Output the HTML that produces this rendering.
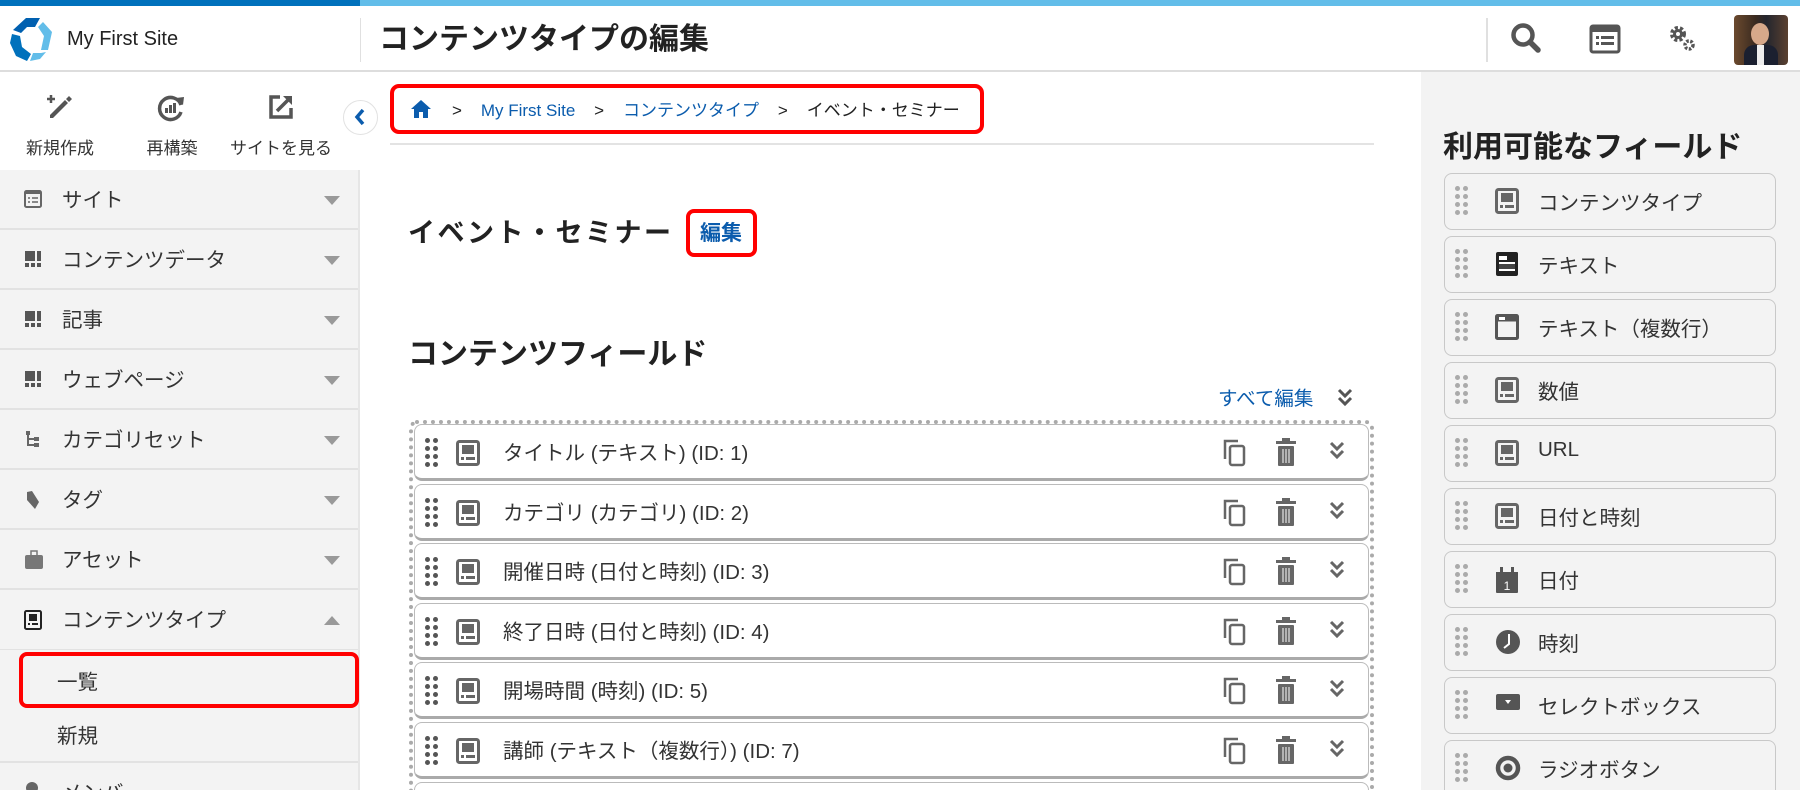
<!DOCTYPE html>
<html><head><meta charset="utf-8"><style>
*{box-sizing:border-box;margin:0;padding:0}
html{width:1800px;height:790px;overflow:hidden}
body{width:1800px;height:790px;overflow:hidden;background:#fff;font-family:"Liberation Sans","Noto Sans CJK JP",sans-serif;color:#222;position:relative}
.a{position:absolute}
.stripe1{left:0;top:0;width:360px;height:6px;background:#0071bc}
.stripe2{left:360px;top:0;width:1440px;height:6px;background:#62bde9}
.hdr{left:0;top:6px;width:1800px;height:66px;border-bottom:2px solid #ddd}
.side{left:0;top:72px;width:360px;height:718px;background:#f3f3f3;border-right:2px solid #e6e6e6}
.tool{left:0;top:72px;width:360px;height:98px;background:#fff}
.tl{font-size:17px;color:#333;width:110px;text-align:center}
.item{left:0;width:358px;height:60px;border-bottom:2px solid #e2e2e2;font-size:20.5px;color:#333}
.item span{position:absolute;left:62px;top:13px}
.item svg.ic{position:absolute;left:24px;top:20px}
.caret{position:absolute;left:324px;top:26px;width:0;height:0;border-left:8px solid transparent;border-right:8px solid transparent;border-top:9px solid #999}
.caret.up{border-top:none;border-bottom:9px solid #999}
.right{left:1421px;top:72px;width:379px;height:718px;background:#f3f3f3}
.fi{left:1444px;width:332px;height:57px;border:1.5px solid #c8c8c8;border-radius:8px;background:#f3f3f3;font-size:20.5px;color:#333}
.fi span{position:absolute;left:93px;top:12px}
.row{left:414px;width:955px;height:57px;border:1.5px solid #bbb;border-bottom:3px solid #aaa;border-radius:8px;background:#fff;font-size:20.5px;color:#333}
.row span{position:absolute;left:88px;top:11px}
.grip{position:absolute;display:grid;grid-template-columns:5px 5px;gap:3px 3px}
.grip i{width:5px;height:5px;border-radius:50%;background:#555;display:block}
.grip.l i{background:#aaa}
</style></head><body>
<div class="a stripe1"></div><div class="a stripe2"></div>
<div class="a hdr"></div>
<svg class="a" style="left:10px;top:16px" width="44" height="46" viewBox="0 0 44 46">
<path d="M16 2 L30 2 L25 11 L17 11 L11 17 L3 14 Z" fill="#0060b0"/>
<path d="M33 6 L42 16 L38 34 L31 34 L34 20 L28 11 Z" fill="#62bde9"/>
<path d="M2 18 L10 20 L12 31 L21 38 L17 45 L6 40 L0 27 Z" fill="#0071bc"/>
<path d="M23 37 L31 37 L36 36 L30 43 L20 45 Z" fill="#62bde9"/>
</svg>
<div class="a" style="left:67px;top:28px;font-size:20px;color:#222">My First Site</div>
<div class="a" style="left:360px;top:18px;width:1px;height:44px;background:#e0e0e0"></div>
<div class="a" style="left:379px;top:14px;font-size:30px;font-weight:bold;color:#222">コンテンツタイプの編集</div>
<div class="a" style="left:1486px;top:18px;width:2px;height:44px;background:#e0e0e0"></div>
<svg class="a" style="left:1510px;top:22px" width="32" height="32" viewBox="0 0 32 32"><circle cx="13" cy="13" r="9.5" fill="none" stroke="#555" stroke-width="4.5"/><path d="M20 20 L28 28" stroke="#555" stroke-width="5.5" stroke-linecap="round"/></svg>
<svg class="a" style="left:1589px;top:24px" width="32" height="30" viewBox="0 0 32 30"><rect x="2" y="2" width="28" height="26" rx="2" fill="none" stroke="#555" stroke-width="3"/><rect x="2" y="2" width="28" height="6" fill="#555"/><rect x="7" y="12" width="3" height="3" fill="#555"/><rect x="12" y="12" width="13" height="3" fill="#555"/><rect x="7" y="18" width="3" height="3" fill="#555"/><rect x="12" y="18" width="13" height="3" fill="#555"/></svg>
<svg class="a" style="left:1668px;top:22px" width="30" height="32" viewBox="0 0 30 32"><circle cx="10" cy="12" r="6" fill="none" stroke="#555" stroke-width="4" stroke-dasharray="3 2"/><circle cx="10" cy="12" r="3.5" fill="none" stroke="#555" stroke-width="3"/><circle cx="21" cy="23" r="4" fill="none" stroke="#555" stroke-width="3.5" stroke-dasharray="2.5 1.5"/></svg>
<div class="a" style="left:1734px;top:15px;width:54px;height:50px;border-radius:4px;background:linear-gradient(90deg,#6b4a2e,#3a2a20 40%,#24262e 60%,#5a4030);overflow:hidden"><div style="position:absolute;left:17px;top:8px;width:18px;height:22px;border-radius:50%;background:#d6a88a"></div><div style="position:absolute;left:10px;top:30px;width:34px;height:22px;background:#1b2030;border-radius:10px 10px 0 0"></div><div style="position:absolute;left:23px;top:30px;width:7px;height:20px;background:#eee"></div></div>

<div class="a side"></div>
<div class="a tool"></div>
<svg class="a" style="left:46px;top:93px" width="28" height="28" viewBox="0 0 28 28"><path d="M7 25 L4 25 L4 22 L19 7 L22 10 Z M20 6 L23 3 L26 6 L23 9 Z" fill="#555"/><path d="M5 2 V10 M1 6 H9" stroke="#555" stroke-width="2.5"/></svg>
<svg class="a" style="left:156px;top:93px" width="30" height="30" viewBox="0 0 30 30"><path d="M25 12 A11 11 0 1 0 25 19" fill="none" stroke="#555" stroke-width="3.5"/><path d="M20 5 L28 4 L27 12 Z" fill="#555"/><rect x="9" y="15" width="3" height="5" fill="#555"/><rect x="13" y="12" width="3" height="8" fill="#555"/><rect x="17" y="10" width="3" height="10" fill="#555"/></svg>
<svg class="a" style="left:268px;top:94px" width="26" height="26" viewBox="0 0 26 26"><path d="M12 3 H3 V23 H23 V14" fill="none" stroke="#555" stroke-width="3.5"/><path d="M9 17 L22 4" stroke="#555" stroke-width="3.5"/><path d="M15 2 H24 V11 Z" fill="#555"/></svg>
<div class="a tl" style="left:5px;top:134px">新規作成</div>
<div class="a tl" style="left:117px;top:134px">再構築</div>
<div class="a tl" style="left:226px;top:134px">サイトを見る</div>
<div class="a" style="left:343px;top:100px;width:35px;height:35px;border-radius:50%;background:#fff;border:1px solid #e2e2e2"></div>
<svg class="a" style="left:353px;top:108px" width="14" height="18" viewBox="0 0 14 18"><path d="M10 2 L4 9 L10 16" fill="none" stroke="#0b5cad" stroke-width="3.5"/></svg>

<div class="a item" style="top:170px"><svg class="ic" width="18" height="18" viewBox="0 0 18 18"><rect x="1" y="1" width="16" height="16" rx="1.5" fill="none" stroke="#666" stroke-width="2"/><rect x="1" y="1" width="16" height="3" fill="#666"/><path d="M4 8H6M8 8H14M4 12H6M8 12H14" stroke="#666" stroke-width="1.6"/></svg><span>サイト</span><div class="caret"></div></div>
<div class="a item" style="top:230px"><svg class="ic" width="18" height="18" viewBox="0 0 18 18"><rect x="1" y="1" width="10" height="10" fill="#555"/><rect x="13" y="1" width="4" height="10" fill="#555"/><rect x="1" y="13" width="4" height="4" fill="#555"/><rect x="7" y="13" width="4" height="4" fill="#555"/><rect x="13" y="13" width="4" height="4" fill="#555"/></svg><span>コンテンツデータ</span><div class="caret"></div></div>
<div class="a item" style="top:290px"><svg class="ic" width="18" height="18" viewBox="0 0 18 18"><rect x="1" y="1" width="10" height="10" fill="#555"/><rect x="13" y="1" width="4" height="10" fill="#555"/><rect x="1" y="13" width="4" height="4" fill="#555"/><rect x="7" y="13" width="4" height="4" fill="#555"/><rect x="13" y="13" width="4" height="4" fill="#555"/></svg><span>記事</span><div class="caret"></div></div>
<div class="a item" style="top:350px"><svg class="ic" width="18" height="18" viewBox="0 0 18 18"><rect x="1" y="1" width="10" height="10" fill="#555"/><rect x="13" y="1" width="4" height="10" fill="#555"/><rect x="1" y="13" width="4" height="4" fill="#555"/><rect x="7" y="13" width="4" height="4" fill="#555"/><rect x="13" y="13" width="4" height="4" fill="#555"/></svg><span>ウェブページ</span><div class="caret"></div></div>
<div class="a item" style="top:410px"><svg class="ic" width="18" height="18" viewBox="0 0 18 18"><rect x="2" y="1" width="4" height="4" fill="#666"/><path d="M4 5V15H10M4 9H10" stroke="#666" stroke-width="2" fill="none"/><rect x="10" y="7" width="5" height="4" fill="#666"/><rect x="10" y="13" width="5" height="4" fill="#666"/></svg><span>カテゴリセット</span><div class="caret"></div></div>
<div class="a item" style="top:470px"><svg class="ic" width="18" height="20" viewBox="0 0 18 20"><path d="M3 2 L8 1 L15 12 L11 19 L3 10 Z" fill="#666"/></svg><span>タグ</span><div class="caret"></div></div>
<div class="a item" style="top:530px"><svg class="ic" width="20" height="20" viewBox="0 0 20 20"><rect x="1" y="5" width="18" height="14" rx="2" fill="#777"/><rect x="7" y="1" width="6" height="5" fill="none" stroke="#777" stroke-width="1.5"/></svg><span>アセット</span><div class="caret"></div></div>
<div class="a item" style="top:590px;border-bottom:1px solid #e2e2e2"><svg class="ic" width="18" height="20" viewBox="0 0 18 20"><rect x="1" y="1" width="16" height="18" rx="1.5" fill="none" stroke="#222" stroke-width="2"/><rect x="5" y="4" width="8" height="7" fill="#222"/><rect x="4" y="13" width="2" height="2" fill="#222"/><rect x="8" y="13" width="6" height="2" fill="#222"/></svg><span>コンテンツタイプ</span><div class="caret up"></div></div>
<div class="a" style="left:19px;top:652px;width:340px;height:56px;border:4px solid #f00;border-radius:8px"></div>
<div class="a" style="left:57px;top:665px;font-size:20.5px;color:#333">一覧</div>
<div class="a" style="left:57px;top:719px;font-size:20.5px;color:#333">新規</div>
<div class="a" style="left:0;top:761px;width:358px;height:2px;background:#e2e2e2"></div>
<div class="a" style="left:62px;top:776px;font-size:20.5px;color:#333">メンバ</div>
<div class="a" style="left:26px;top:782px;width:12px;height:12px;border-radius:50%;background:#666"></div>

<div class="a" style="left:390px;top:84px;width:594px;height:50px;border:4px solid #f00;border-radius:9px"></div>
<svg class="a" style="left:410px;top:99px" width="22" height="20" viewBox="0 0 22 20"><path d="M11 1 L21 10 L18 10 L18 19 L13 19 L13 13 L9 13 L9 19 L4 19 L4 10 L1 10 Z" fill="#0b5cad"/></svg>
<div class="a" style="left:452px;top:96px;font-size:17px;color:#222;white-space:nowrap">&gt;&nbsp;&nbsp;&nbsp;&nbsp;<span style="color:#0b5cad">My First Site</span>&nbsp;&nbsp;&nbsp;&nbsp;&gt;&nbsp;&nbsp;&nbsp;&nbsp;<span style="color:#0b5cad">コンテンツタイプ</span>&nbsp;&nbsp;&nbsp;&nbsp;&gt;&nbsp;&nbsp;&nbsp;&nbsp;イベント・セミナー</div>
<div class="a" style="left:390px;top:143px;width:984px;height:2px;background:#e3e3e3"></div>
<div class="a" style="left:408px;top:211px;font-size:27px;font-weight:bold;color:#222;letter-spacing:2.5px">イベント・セミナー</div>
<div class="a" style="left:686px;top:209px;width:71px;height:48px;border:4px solid #f00;border-radius:8px"></div>
<div class="a" style="left:700px;top:217px;font-size:21px;font-weight:bold;color:#0b5cad">編集</div>
<div class="a" style="left:408px;top:329px;font-size:30px;font-weight:bold;color:#222">コンテンツフィールド</div>
<div class="a" style="left:1218px;top:382px;font-size:19.5px;color:#0b5cad">すべて編集</div>
<svg class="a" style="left:1337px;top:387px" width="16" height="20" viewBox="0 0 16 20"><path d="M2 3 L8 9 L14 3 M2 11 L8 17 L14 11" fill="none" stroke="#555" stroke-width="3"/></svg>
<div class="a" style="left:409px;top:420px;width:965px;height:380px;border:4px dotted #aaa;border-radius:8px"></div>

<div class="a row" style="top:424px"><span>タイトル (テキスト) (ID: 1)</span></div>
<div class="a row" style="top:484px"><span>カテゴリ (カテゴリ) (ID: 2)</span></div>
<div class="a row" style="top:543px"><span>開催日時 (日付と時刻) (ID: 3)</span></div>
<div class="a row" style="top:603px"><span>終了日時 (日付と時刻) (ID: 4)</span></div>
<div class="a row" style="top:662px"><span>開場時間 (時刻) (ID: 5)</span></div>
<div class="a row" style="top:722px"><span>講師 (テキスト（複数行）) (ID: 7)</span></div>
<div class="a row" style="top:782px;height:8px;border-bottom:none;border-radius:8px 8px 0 0"></div>

<div class="a right"></div>
<div class="a" style="left:1443px;top:122px;font-size:30px;font-weight:bold;color:#222">利用可能なフィールド</div>
<div class="a fi" style="top:173px"><span>コンテンツタイプ</span></div>
<div class="a fi" style="top:236px"><span>テキスト</span></div>
<div class="a fi" style="top:299px"><span>テキスト（複数行）</span></div>
<div class="a fi" style="top:362px"><span>数値</span></div>
<div class="a fi" style="top:425px"><span>URL</span></div>
<div class="a fi" style="top:488px"><span>日付と時刻</span></div>
<div class="a fi" style="top:551px"><span>日付</span></div>
<div class="a fi" style="top:614px"><span>時刻</span></div>
<div class="a fi" style="top:677px"><span>セレクトボックス</span></div>
<div class="a fi" style="top:740px;height:50px;border-bottom:none;border-radius:8px 8px 0 0"><span>ラジオボタン</span></div>

<script>
function grip(x,y,l){var d=document.createElement('div');d.className='a grip'+(l?' l':'');d.style.left=x+'px';d.style.top=y+'px';for(var i=0;i<8;i++)d.appendChild(document.createElement('i'));document.body.appendChild(d);}
var ct='<svg width="24" height="26" viewBox="0 0 24 26"><rect x="1.5" y="1.5" width="21" height="23" rx="2" fill="none" stroke="#666" stroke-width="3"/><rect x="6" y="5" width="12" height="9" fill="#666"/><rect x="5" y="17" width="3" height="3" fill="#666"/><rect x="10" y="17" width="9" height="3" fill="#666"/></svg>';
function icon(x,y,s){var d=document.createElement('div');d.className='a';d.style.left=x+'px';d.style.top=y+'px';d.innerHTML=s;document.body.appendChild(d);}
var rows=[424,484,543,603,662,722];
rows.forEach(function(t){
grip(425,t+14,0);
icon(456,t+16,ct);
icon(1222,t+14,'<svg width="26" height="30" viewBox="0 0 26 30"><path d="M16 3 H3 V21" fill="none" stroke="#666" stroke-width="2.5"/><rect x="8" y="8" width="14" height="19" rx="2" fill="none" stroke="#666" stroke-width="2.5"/></svg>');
icon(1274,t+14,'<svg width="24" height="30" viewBox="0 0 24 30"><rect x="2" y="3" width="20" height="3" fill="#666"/><rect x="8" y="0" width="8" height="3" fill="#666"/><rect x="4" y="8" width="16" height="20" rx="1" fill="#666"/><path d="M9 11V25M12 11V25M15 11V25" stroke="#fff" stroke-width="1"/></svg>');
icon(1328,t+16,'<svg width="18" height="22" viewBox="0 0 18 22"><path d="M3 3 L9 9 L15 3 M3 11 L9 17 L15 11" fill="none" stroke="#666" stroke-width="3"/></svg>');
});
var fs=[173,236,299,362,425,488,551,614,677,740];
var ics=[ct,
'<svg width="24" height="26" viewBox="0 0 24 26"><rect x="1" y="1" width="22" height="24" rx="2" fill="#222"/><rect x="4" y="5" width="8" height="4" fill="#fff"/><rect x="4" y="11" width="16" height="9" fill="#fff"/><rect x="4" y="13" width="16" height="5" fill="#444"/></svg>',
'<svg width="24" height="26" viewBox="0 0 24 26"><rect x="1.5" y="1.5" width="21" height="23" rx="1" fill="none" stroke="#555" stroke-width="3"/><rect x="1.5" y="1.5" width="21" height="6" fill="#555"/><rect x="4" y="3" width="6" height="3" fill="#fff"/></svg>',
ct,ct,ct,
'<svg width="24" height="28" viewBox="0 0 24 28"><rect x="1" y="6" width="22" height="21" rx="1" fill="#555"/><rect x="5" y="1" width="3" height="7" fill="#555"/><rect x="16" y="1" width="3" height="7" fill="#555"/><rect x="1" y="6" width="22" height="3" fill="#555"/><text x="12" y="24" font-size="12" fill="#fff" text-anchor="middle" font-family="Liberation Sans">1</text></svg>',
'<svg width="26" height="26" viewBox="0 0 26 26"><circle cx="13" cy="13" r="12" fill="#555"/><path d="M14 5 V15 L9 19" fill="none" stroke="#fff" stroke-width="2"/></svg>',
'<svg width="26" height="20" viewBox="0 0 26 20"><rect x="1" y="2" width="24" height="16" rx="2" fill="#555"/><path d="M10 8 L16 8 L13 12 Z" fill="#fff"/></svg>',
'<svg width="26" height="26" viewBox="0 0 26 26"><circle cx="13" cy="13" r="10" fill="none" stroke="#555" stroke-width="4.5"/><circle cx="13" cy="13" r="4.5" fill="#555"/></svg>'];
fs.forEach(function(t,i){grip(1455,t+13,1);icon(1495,t+15,ics[i]);});
</script>
</body></html>
